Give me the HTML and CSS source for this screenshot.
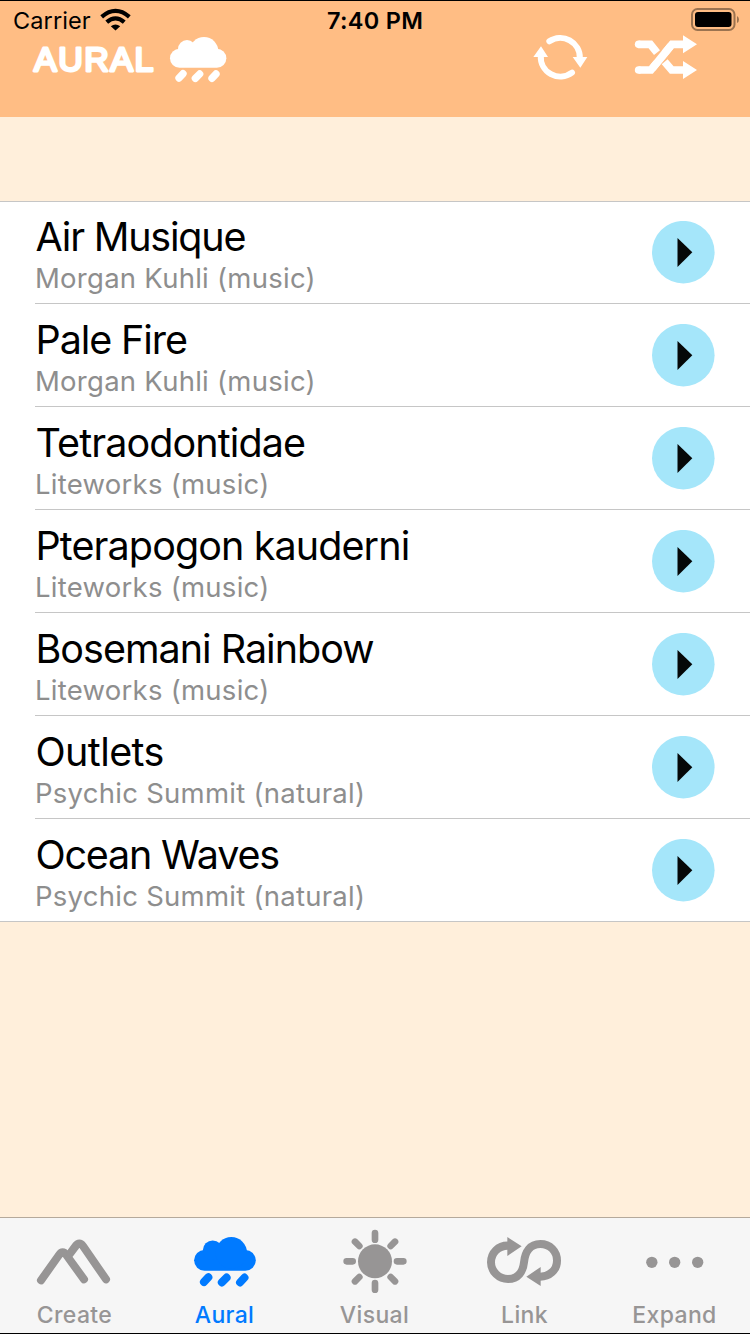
FILE: index.html
```html
<!DOCTYPE html>
<html lang="en">
<head>
<meta charset="utf-8">
<title>Aural</title>
<link rel="stylesheet" href="styles.css">
</head>
<body>
<svg class="defs" aria-hidden="true">
  <symbol id="cloud" viewBox="507 108 174 141">
    <g fill="currentColor">
      <rect x="510" y="146" width="169" height="57" rx="28.5"/>
      <circle cx="561" cy="147" r="27"/>
      <circle cx="612" cy="154" r="43"/>
    </g>
    <g stroke="currentColor" stroke-width="22" stroke-linecap="round">
      <path d="M549 221L537 234M599 222L586 235M648 222L636 235"/>
    </g>
  </symbol>
  <symbol id="play" viewBox="0 0 63 63">
    <circle cx="31.3" cy="31.2" r="31.3" fill="#a5e6fa"/>
    <path d="M25.5 17L40.3 31.3L25.5 46Z" fill="#050808"/>
  </symbol>
</svg>
<div class="screen">
  <header class="header">
    <div class="status">
      <div class="carrier">Carrier
        <svg class="wifi" viewBox="298 26 92 68"><g fill="none" stroke="#000" stroke-width="12.500"><path d="M303 52Q344 17 385 52"/><path d="M318 68Q344 45 370 68"/></g><path d="M330 80Q344 69 358 80L344 93Z"/></svg>
      </div>
      <div class="time">7:40 PM</div>
      <div class="power">
        <svg class="battery" viewBox="0 0 49 24"><rect x="1" y="1" width="42.5" height="21" rx="5.5" fill="none" stroke="#9b7350" stroke-width="2"/><rect x="4" y="4" width="36.5" height="15" rx="3" fill="#000"/><path d="M46 8Q48 9 48 11.5Q48 14 46 15Z" fill="#9b7350"/></svg>
      </div>
    </div>
    <div class="navbar">
      <svg class="title" role="heading" aria-level="1"><text x="2" y="37">AURAL</text></svg>
      <svg class="title-cloud"><use href="#cloud"/></svg>
      <svg class="repeat" viewBox="69 99 165 144"><g fill="none" stroke="#fff" stroke-width="18" stroke-linecap="round"><path d="M118 124A58.500 58.500 0 0 1 209.500 174"/><path d="M186 218A58.500 58.500 0 0 1 92.500 167"/></g><path fill="#fff" d="M188 171H232L211 203ZM70 171H114L93 139Z"/></svg>
      <svg class="shuffle" viewBox="372 102 192 138"><g fill="none" stroke="#fff" stroke-width="23"><path d="M386 133H421L441 158M464 185L485 210H522"/><path d="M386 210H423L486 133H522"/></g><path fill="none" stroke="#ffbd84" stroke-width="4" d="M431 182L456 152M449 190L471 164"/><path fill="#fff" d="M519 106L561 133L519 160ZM519 183L561 210L519 237Z"/><path stroke="#fff" stroke-width="23" d="M427 205L482 138"/><circle cx="386" cy="133" r="11.500" fill="#fff"/><circle cx="386" cy="210" r="11.500" fill="#fff"/></svg>
    </div>
  </header>
  <main class="content">
    <ul class="tracks">
      <li class="track"><div class="info"><div class="name tightest">Air Musique</div><div class="by">Morgan Kuhli (music)</div></div><svg class="play"><use href="#play"/></svg></li>
      <li class="track"><div class="info"><div class="name tighter">Pale Fire</div><div class="by">Morgan Kuhli (music)</div></div><svg class="play"><use href="#play"/></svg></li>
      <li class="track"><div class="info"><div class="name">Tetraodontidae</div><div class="by">Liteworks (music)</div></div><svg class="play"><use href="#play"/></svg></li>
      <li class="track"><div class="info"><div class="name">Pterapogon kauderni</div><div class="by">Liteworks (music)</div></div><svg class="play"><use href="#play"/></svg></li>
      <li class="track"><div class="info"><div class="name tight">Bosemani Rainbow</div><div class="by">Liteworks (music)</div></div><svg class="play"><use href="#play"/></svg></li>
      <li class="track"><div class="info"><div class="name loose">Outlets</div><div class="by">Psychic Summit (natural)</div></div><svg class="play"><use href="#play"/></svg></li>
      <li class="track"><div class="info"><div class="name tightest">Ocean Waves</div><div class="by">Psychic Summit (natural)</div></div><svg class="play"><use href="#play"/></svg></li>
    </ul>
  </main>
  <nav class="tabs">
    <div class="tab">
      <svg class="tab-icon" viewBox="0 60 450 210"><g fill="none" stroke="currentColor" stroke-width="24" stroke-linecap="round" stroke-linejoin="round"><path d="M123 226L177 150Q188 134 199 150L252 223"/><path d="M210 146L227 123Q238 108 249 123L318 223"/></g></svg>
      <span>Create</span>
    </div>
    <div class="tab tab-active">
      <svg class="tab-cloud"><use href="#cloud"/></svg>
      <span>Aural</span>
    </div>
    <div class="tab">
      <svg class="tab-icon" viewBox="0 60 450 210"><circle cx="225" cy="169" r="51" fill="currentColor"/><g stroke="currentColor" stroke-width="20" stroke-linecap="round"><path d="M225 84V104M225 234V254M140 169H158M291 169H310M165 110L178 123M285 110L272 123M165 229L178 216M285 229L272 216"/></g></svg>
      <span>Visual</span>
    </div>
    <div class="tab">
      <svg class="tab-icon" viewBox="450 60 450 210"><path fill="none" stroke="currentColor" stroke-width="24" d="M627 122C594 120 573 145 573 172C573 200 597 222 624 222C655 222 669 199 672 172C675 140 690 117 721 117C750 117 771 138 771 167C771 195 748 216 718 215"/><path fill="currentColor" d="M622 96L665 124L622 153ZM722 186L679 215L722 243Z"/></svg>
      <span>Link</span>
    </div>
    <div class="tab">
      <svg class="tab-icon" viewBox="60 60 450 210"><g fill="currentColor"><circle cx="215.500" cy="172" r="17"/><circle cx="284" cy="172" r="17"/><circle cx="353" cy="172" r="17"/></g></svg>
      <span>Expand</span>
    </div>
  </nav>
</div>
</body>
</html>
```
FILE: styles.css
```css
* { box-sizing: border-box; }
body { margin: 0; font-family: Inter, "Liberation Sans", sans-serif; color: #000; }
svg { display: block; flex: none; }
.defs { display: none; }
.screen { display: flex; flex-direction: column; width: 750px; height: 1334px; overflow: hidden; background: #ffefdb; border-top: 1px solid #000; border-bottom: 1px solid #000; }
.header { height: 116px; flex: none; background: #ffbd84; }
.status { display: grid; grid-template-columns: 1fr 1fr 1fr; align-items: start; height: 38px; font-size: 23.500px; line-height: 40px; white-space: nowrap; }
.carrier { display: flex; align-items: flex-start; gap: 9px; padding-left: 13px; letter-spacing: 0.1px; }
.wifi { width: 31px; height: 23px; margin-top: 7px; }
.time { text-align: center; font-weight: 600; letter-spacing: 0.3px; }
.power { display: flex; justify-content: flex-end; padding: 7px 10px 0 0; }
.battery { width: 49px; height: 24px; }
.navbar { display: flex; align-items: flex-start; height: 60px; margin-top: -5px; padding-left: 32px; }
.title { width: 137px; height: 46px; }
.title text { font: 34px "Liberation Sans", sans-serif; letter-spacing: 1.5px; fill: #fff; stroke: #fff; stroke-width: 2.8px; stroke-linejoin: round; }
.title-cloud { width: 58px; height: 47px; margin-top: 2px; color: #fff; }
.repeat { width: 55px; height: 48px; margin: -1px 0 0 306px; }
.shuffle { width: 64px; height: 46px; margin: 0 0 0 46px; }
.content { flex: 1; padding-top: 84px; }
.tracks { margin: 0; padding: 0; list-style: none; background: #fff; border-top: 1px solid #c6c6c6; border-bottom: 1px solid #c6c6c6; }
.track { display: flex; justify-content: space-between; height: 103px; margin-left: 35px; padding: 18px 35px 0 0; border-bottom: 1px solid #c6c6c6; }
.track:first-child { height: 102px; padding-top: 17px; }
.track:last-child { height: 102px; border-bottom: 0; }
.name { padding-left: 0.5px; font-size: 39.500px; line-height: 36px; letter-spacing: -0.9px; white-space: nowrap; }
.name.loose { letter-spacing: -0.6px; }
.name.tight { letter-spacing: -1px; }
.name.tighter { letter-spacing: -1.1px; }
.name.tightest { letter-spacing: -1.200px; }
.by { padding-top: 5px; font-size: 27.500px; line-height: 36px; letter-spacing: 0.26px; color: #8e8e8e; white-space: nowrap; }
.play { width: 63px; height: 63px; margin-top: 2px; }
.tabs { display: grid; grid-template-columns: repeat(5, 1fr); height: 116px; flex: none; background: #f6f6f6; border-top: 1px solid #b5a99b; color: #979595; font-size: 23px; font-weight: 500; }
.tab { display: flex; flex-direction: column; align-items: center; padding-top: 7px; }
.tab-icon { width: 150px; height: 70px; }
.tab-cloud { width: 63.500px; height: 51.500px; margin: 11px 0 7.500px; }
.tab span { margin-top: 6px; padding-right: 1px; line-height: 28px; letter-spacing: 0.35px; }
.tab-active { color: #007aff; }
```
